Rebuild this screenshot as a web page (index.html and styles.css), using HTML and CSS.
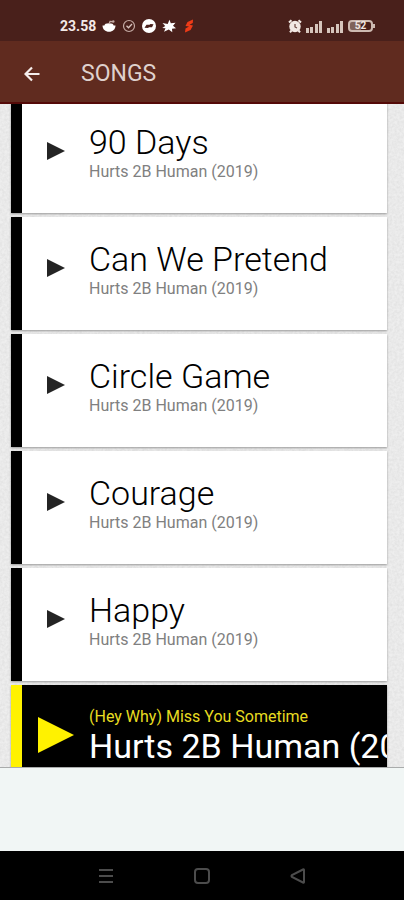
FILE: index.html
```
<!DOCTYPE html>
<html lang="en">
<head>
<meta charset="utf-8">
<meta name="viewport" content="width=device-width, initial-scale=1">
<title>Songs</title>
<link rel="stylesheet" href="styles.css">
</head>
<body>
<div class="status">
  <div class="status-group">
    <span class="clock">23.58</span>
    <svg class="ico" viewBox="0 0 14 14" aria-hidden="true"><path d="M.5 6.500h13c0 3.800-2.800 6.300-6.500 6.300S.5 10.300.5 6.500z" fill="#fff"/><ellipse cx="7" cy="6.500" rx="4.500" ry="2.200" fill="#fff"/><path d="M7 5 8 2.500l3 .2" fill="none" stroke="#c4aaa4" stroke-width="1.200"/><circle cx="11.300" cy="2.500" r="1.200" fill="#c4aaa4"/></svg>
    <svg class="ico" viewBox="0 0 14 14" aria-hidden="true"><circle cx="7" cy="7" r="5.500" fill="none" stroke="#c4aaa4" stroke-width="1.200"/><path d="m4.500 6.800 2 2L10 5" fill="none" stroke="#d8c4bf" stroke-width="1.300"/></svg>
    <svg class="ico" viewBox="0 0 14 14" aria-hidden="true"><circle cx="7" cy="7" r="7" fill="#fff"/><path d="M2.500 8.800 4.500 5.800h3l1-.8 3 .2-1.500 3H7l-1 .8z" fill="#4a211c"/></svg>
    <svg class="ico" viewBox="0 0 14 14" aria-hidden="true"><path d="m7.500.8 1.300 3.500 4.700-.5-2.500 3 3 2.500-4 .5.300 3.500L6.800 10.500 2 12.800l1.500-3.600L.3 9l2.900-2L.5 4l5.200 1z" fill="#fff"/></svg>
    <svg class="ico" viewBox="0 0 14 14" aria-hidden="true"><path d="M11 .5 5.500 3 3.500 7 7 7.500 3.500 9.500 3 13.500 8.500 11 11 6.500 7.500 5.800 10.800 4z" fill="#ef3b17"/></svg>
  </div>
  <div class="status-group right">
    <svg class="ico" viewBox="0 0 14 14" aria-hidden="true"><circle cx="7" cy="7.500" r="5.700" fill="#f3e9e4"/><path d="m1 3.500 2.500-2.300M13 3.500l-2.500-2.300M3.500 11.500 2 13.300M10.500 11.500l1.500 1.800" stroke="#f3e9e4" stroke-width="2"/><path d="M7 5v3l2 1" fill="none" stroke="#6d4740" stroke-width="1.200"/></svg>
    <svg class="signal" viewBox="0 0 17 13" aria-hidden="true"><path d="M0 8h3v5H0zM4 7h3v6H4zM9 4h3v9H9zM13 1h3v12h-3z" fill="#d6c5bc"/></svg>
    <svg class="signal" viewBox="0 0 17 13" aria-hidden="true"><path d="M0 8h3v5H0zM4 7h3v6H4zM9 4h3v9H9zM13 1h3v12h-3z" fill="#d6c5bc"/></svg>
    <span class="battery">52</span>
  </div>
</div>
<header class="appbar">
  <button class="back" type="button" aria-label="Back"><svg viewBox="0 0 16 16" aria-hidden="true"><path d="M15.500 8H2M8 1.500 1.500 8 8 14.500" fill="none" stroke="#f5eeec" stroke-width="2.200"/></svg></button>
  <h1>SONGS</h1>
</header>
<main>
  <svg class="paper" aria-hidden="true"><filter id="grain"><feTurbulence type="fractalNoise" baseFrequency="0.4" numOctaves="2"/><feColorMatrix values="0 0 0 0 .4  0 0 0 0 .4  0 0 0 0 .4  .3 0 0 0 -.08"/></filter><rect width="100%" height="100%" filter="url(#grain)"/></svg>
  <ul class="songs">
    <li class="card"><button class="play" type="button" aria-label="Play 90 Days"><svg viewBox="0 0 18 18"><path d="M0 0v18l18-9z"/></svg></button><div class="text"><h2>90 Days</h2><p>Hurts 2B Human (2019)</p></div></li>
    <li class="card"><button class="play" type="button" aria-label="Play Can We Pretend"><svg viewBox="0 0 18 18"><path d="M0 0v18l18-9z"/></svg></button><div class="text"><h2>Can We Pretend</h2><p>Hurts 2B Human (2019)</p></div></li>
    <li class="card"><button class="play" type="button" aria-label="Play Circle Game"><svg viewBox="0 0 18 18"><path d="M0 0v18l18-9z"/></svg></button><div class="text"><h2>Circle Game</h2><p>Hurts 2B Human (2019)</p></div></li>
    <li class="card"><button class="play" type="button" aria-label="Play Courage"><svg viewBox="0 0 18 18"><path d="M0 0v18l18-9z"/></svg></button><div class="text"><h2>Courage</h2><p>Hurts 2B Human (2019)</p></div></li>
    <li class="card"><button class="play" type="button" aria-label="Play Happy"><svg viewBox="0 0 18 18"><path d="M0 0v18l18-9z"/></svg></button><div class="text"><h2>Happy</h2><p>Hurts 2B Human (2019)</p></div></li>
    <li class="card current"><button class="play" type="button" aria-label="Play (Hey Why) Miss You Sometime"><svg viewBox="0 0 18 18"><path d="M0 0v18l18-9z"/></svg></button><div class="text"><p>(Hey Why) Miss You Sometime</p><h2>Hurts 2B Human (2019)</h2></div></li>
  </ul>
</main>
<div class="banner"></div>
<nav class="system">
  <button type="button" aria-label="Recent apps"><svg viewBox="0 0 16 16"><path d="M1 2h14M1 8h14M1 14h14"/></svg></button>
  <button type="button" aria-label="Home"><svg viewBox="0 0 16 16"><rect x="1" y="1" width="14" height="14" rx="3"/></svg></button>
  <button type="button" aria-label="Back"><svg viewBox="0 0 16 16"><path d="M14 2v12q0 1-1 .5L2 9q-1-1 0-2l11-5.500q1-.5 1 .5z"/></svg></button>
</nav>
</body>
</html>
```
FILE: styles.css
```
* { box-sizing: border-box; margin: 0; padding: 0; }

body {
  display: flex;
  flex-direction: column;
  height: 100vh;
  overflow: hidden;
  background: #eee;
  font-family: Roboto, "Liberation Sans", sans-serif;
}

button { border: 0; background: none; }
svg { display: block; }
h1, h2 { font-weight: 400; }

.status {
  display: flex;
  justify-content: space-between;
  flex: none;
  padding: 12px 31px 0 60px;
  height: 41px;
  background: #49201b;
}
.status-group { display: flex; align-items: center; gap: 6px; height: 28px; }
.status-group.right { gap: 4px; }
.clock { color: #f3eae8; font-size: 14px; font-weight: 700; }
.ico { width: 14px; height: 14px; }
.signal { width: 17px; height: 13px; }
.battery {
  position: relative;
  width: 25px;
  height: 12px;
  border: 2px solid #cdbab1;
  border-radius: 4px;
  background: linear-gradient(90deg, #80635a 50%, #49201b 50%);
  color: #f3e9e4;
  font-size: 10px;
  font-weight: 700;
  line-height: 8px;
  text-align: center;
}
.battery::after {
  content: "";
  position: absolute;
  top: 2px;
  right: -4px;
  width: 2px;
  height: 4px;
  background: #cdbab1;
}

.appbar {
  display: flex;
  align-items: center;
  flex: none;
  gap: 41px;
  height: 63px;
  padding: 4px 0 0 24px;
  border-bottom: 2px solid #540a08;
  background: #602b1f;
}
.back svg { width: 16px; height: 16px; }
h1 { color: #dfd1cd; font-size: 23px; line-height: 28px; }

main { position: relative; flex: 1; min-height: 0; overflow: hidden; }
.paper { position: absolute; inset: 0; width: 100%; height: 100%; }

.songs {
  position: relative;
  display: flex;
  flex-direction: column;
  gap: 4px;
  margin: -4px 17px 0 11px;
  list-style: none;
}
.card {
  display: flex;
  flex: none;
  height: 113px;
  overflow: hidden;
  border-left: 11px solid #000;
  background: #fff;
  box-shadow: 0 1px 2px #999;
}
.play { display: flex; justify-content: center; flex: none; width: 67px; height: 100px; }
.play svg { width: 18px; height: 18px; margin-top: 42px; fill: #242424; }
.text { padding-top: 22px; white-space: nowrap; }
.text h2 { color: #000; font-size: 34px; font-weight: 300; line-height: 40px; }
.text p { color: #808080; font-size: 16px; line-height: 19px; }

.current { border-color: #fff200; background: #000; }
.current .play svg { width: 36px; height: 36px; margin-top: 32px; fill: #fff200; }
.current .text h2 { color: #fff; font-weight: 400; }
.current .text p { color: #e8dc20; }

.banner { flex: none; height: 84px; border-top: 1px solid #a9abab; background: #f1f6f5; }

.system {
  display: flex;
  align-items: center;
  justify-content: center;
  flex: none;
  gap: 80px;
  height: 49px;
  background: #000;
}
.system svg { width: 16px; height: 16px; fill: none; stroke: #4c4c4c; stroke-width: 2; }
```
